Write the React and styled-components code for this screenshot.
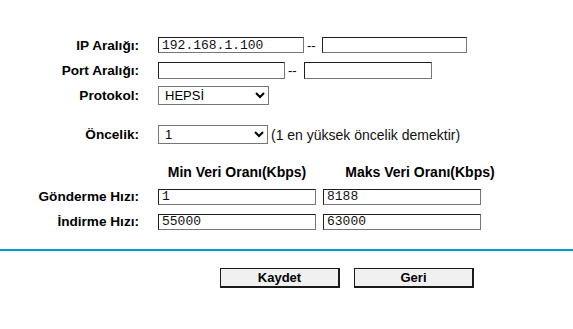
import React from 'react';
import styled, { createGlobalStyle } from 'styled-components';

const Global = createGlobalStyle`
  body {
    margin: 0;
    background: #fff;
    font-family: "Liberation Sans", Arial, sans-serif;
    color: #000;
  }
`

const Page = styled.div`
  width: 573px;
  padding-top: 33px;
`

const Row = styled.div`
  display: flex;
  align-items: center;
  height: ${p => p.$h || 25}px;
  margin-top: ${p => p.$mt || 0}px;
`

const Label = styled.div`
  width: 139px;
  margin-right: 19px;
  text-align: right;
  font-size: 13.6px;
  font-weight: bold;
  flex-shrink: 0;
`

const Field = styled.input`
  box-sizing: border-box;
  width: ${p => p.$w}px;
  height: ${p => p.$h || 16}px;
  padding: 0 3px;
  margin: 0;
  border: 1px solid;
  border-color: #1e1e1e #767676 #767676 #1e1e1e;
  font-family: "Liberation Mono", "Courier New", monospace;
  font-size: 13px;
  color: #111;
  background: #fff;
  outline: none;
`

const Dash = styled.span`
  font-size: 13px;
  padding: ${p => p.$pad || '0 6px 0 3px'};
`

const Select = styled.select`
  box-sizing: border-box;
  width: ${p => p.$w}px;
  height: 19px;
  margin: 0;
  padding: 0 2px;
  border: 1px solid #767676;
  border-radius: 0;
  background: #fff;
  font-family: "Liberation Sans", Arial, sans-serif;
  font-size: 13px;
  color: #000;
`

const Note = styled.span`
  font-size: 14px;
  margin-left: 3px;
  color: #111;
`

const Head = styled.div`
  font-size: 14px;
  font-weight: bold;
  text-align: center;
  white-space: nowrap;
  width: ${p => p.$w}px;
  margin-left: ${p => p.$ml || 0}px;
  flex-shrink: 0;
`

const Gap = styled.span`
  display: inline-block;
  flex-shrink: 0;
  width: ${p => p.$w}px;
`

const Divider = styled.div`
  height: 2px;
  background: #0099d0;
  margin-top: 15px;
`

const Buttons = styled.div`
  display: flex;
  gap: 14px;
  padding-left: 220px;
  margin-top: 17px;
`

const Button = styled.button`
  box-sizing: border-box;
  width: 120px;
  height: 20px;
  margin: 0;
  padding: 0;
  border-style: solid;
  border-width: 1px 2px 2px 1px;
  border-color: #1a1a1a;
  background: #f0f0f0;
  font-family: "Liberation Sans", Arial, sans-serif;
  font-size: 13px;
  font-weight: bold;
  color: #000;
`

export default function App() {
  return (
    <Page>
      <Global />
      <Row $h={24}>
        <Label>IP Aralığı:</Label>
        <Field $w={146} defaultValue="192.168.1.100" />
        <Dash>--</Dash>
        <Field $w={145} defaultValue="" />
      </Row>
      <Row $h={26}>
        <Label>Port Aralığı:</Label>
        <Field $w={127} $h={17} defaultValue="" />
        <Dash $pad="0 7px 0 3px">--</Dash>
        <Field $w={128} $h={17} defaultValue="" />
      </Row>
      <Row $h={24}>
        <Label>Protokol:</Label>
        <Select $w={111} defaultValue="HEPSİ">
          <option>HEPSİ</option>
          <option>TCP</option>
          <option>UDP</option>
        </Select>
      </Row>
      <Row $h={25} $mt={15}>
        <Label>Öncelik:</Label>
        <Select $w={110} defaultValue="1">
          <option>1</option>
          <option>2</option>
          <option>3</option>
        </Select>
        <Note>(1 en yüksek öncelik demektir)</Note>
      </Row>
      <Row $h={24} $mt={13}>
        <Gap $w={158} />
        <Head $w={158}>Min Veri Oranı(Kbps)</Head>
        <Head $w={158} $ml={25}>Maks Veri Oranı(Kbps)</Head>
      </Row>
      <Row $h={25}>
        <Label>Gönderme Hızı:</Label>
        <Field $w={158} defaultValue="1" />
        <Gap $w={7} />
        <Field $w={158} defaultValue="8188" />
      </Row>
      <Row $h={25}>
        <Label>İndirme Hızı:</Label>
        <Field $w={158} defaultValue="55000" />
        <Gap $w={7} />
        <Field $w={158} defaultValue="63000" />
      </Row>
      <Divider />
      <Buttons>
        <Button>Kaydet</Button>
        <Button>Geri</Button>
      </Buttons>
    </Page>
  );
}
